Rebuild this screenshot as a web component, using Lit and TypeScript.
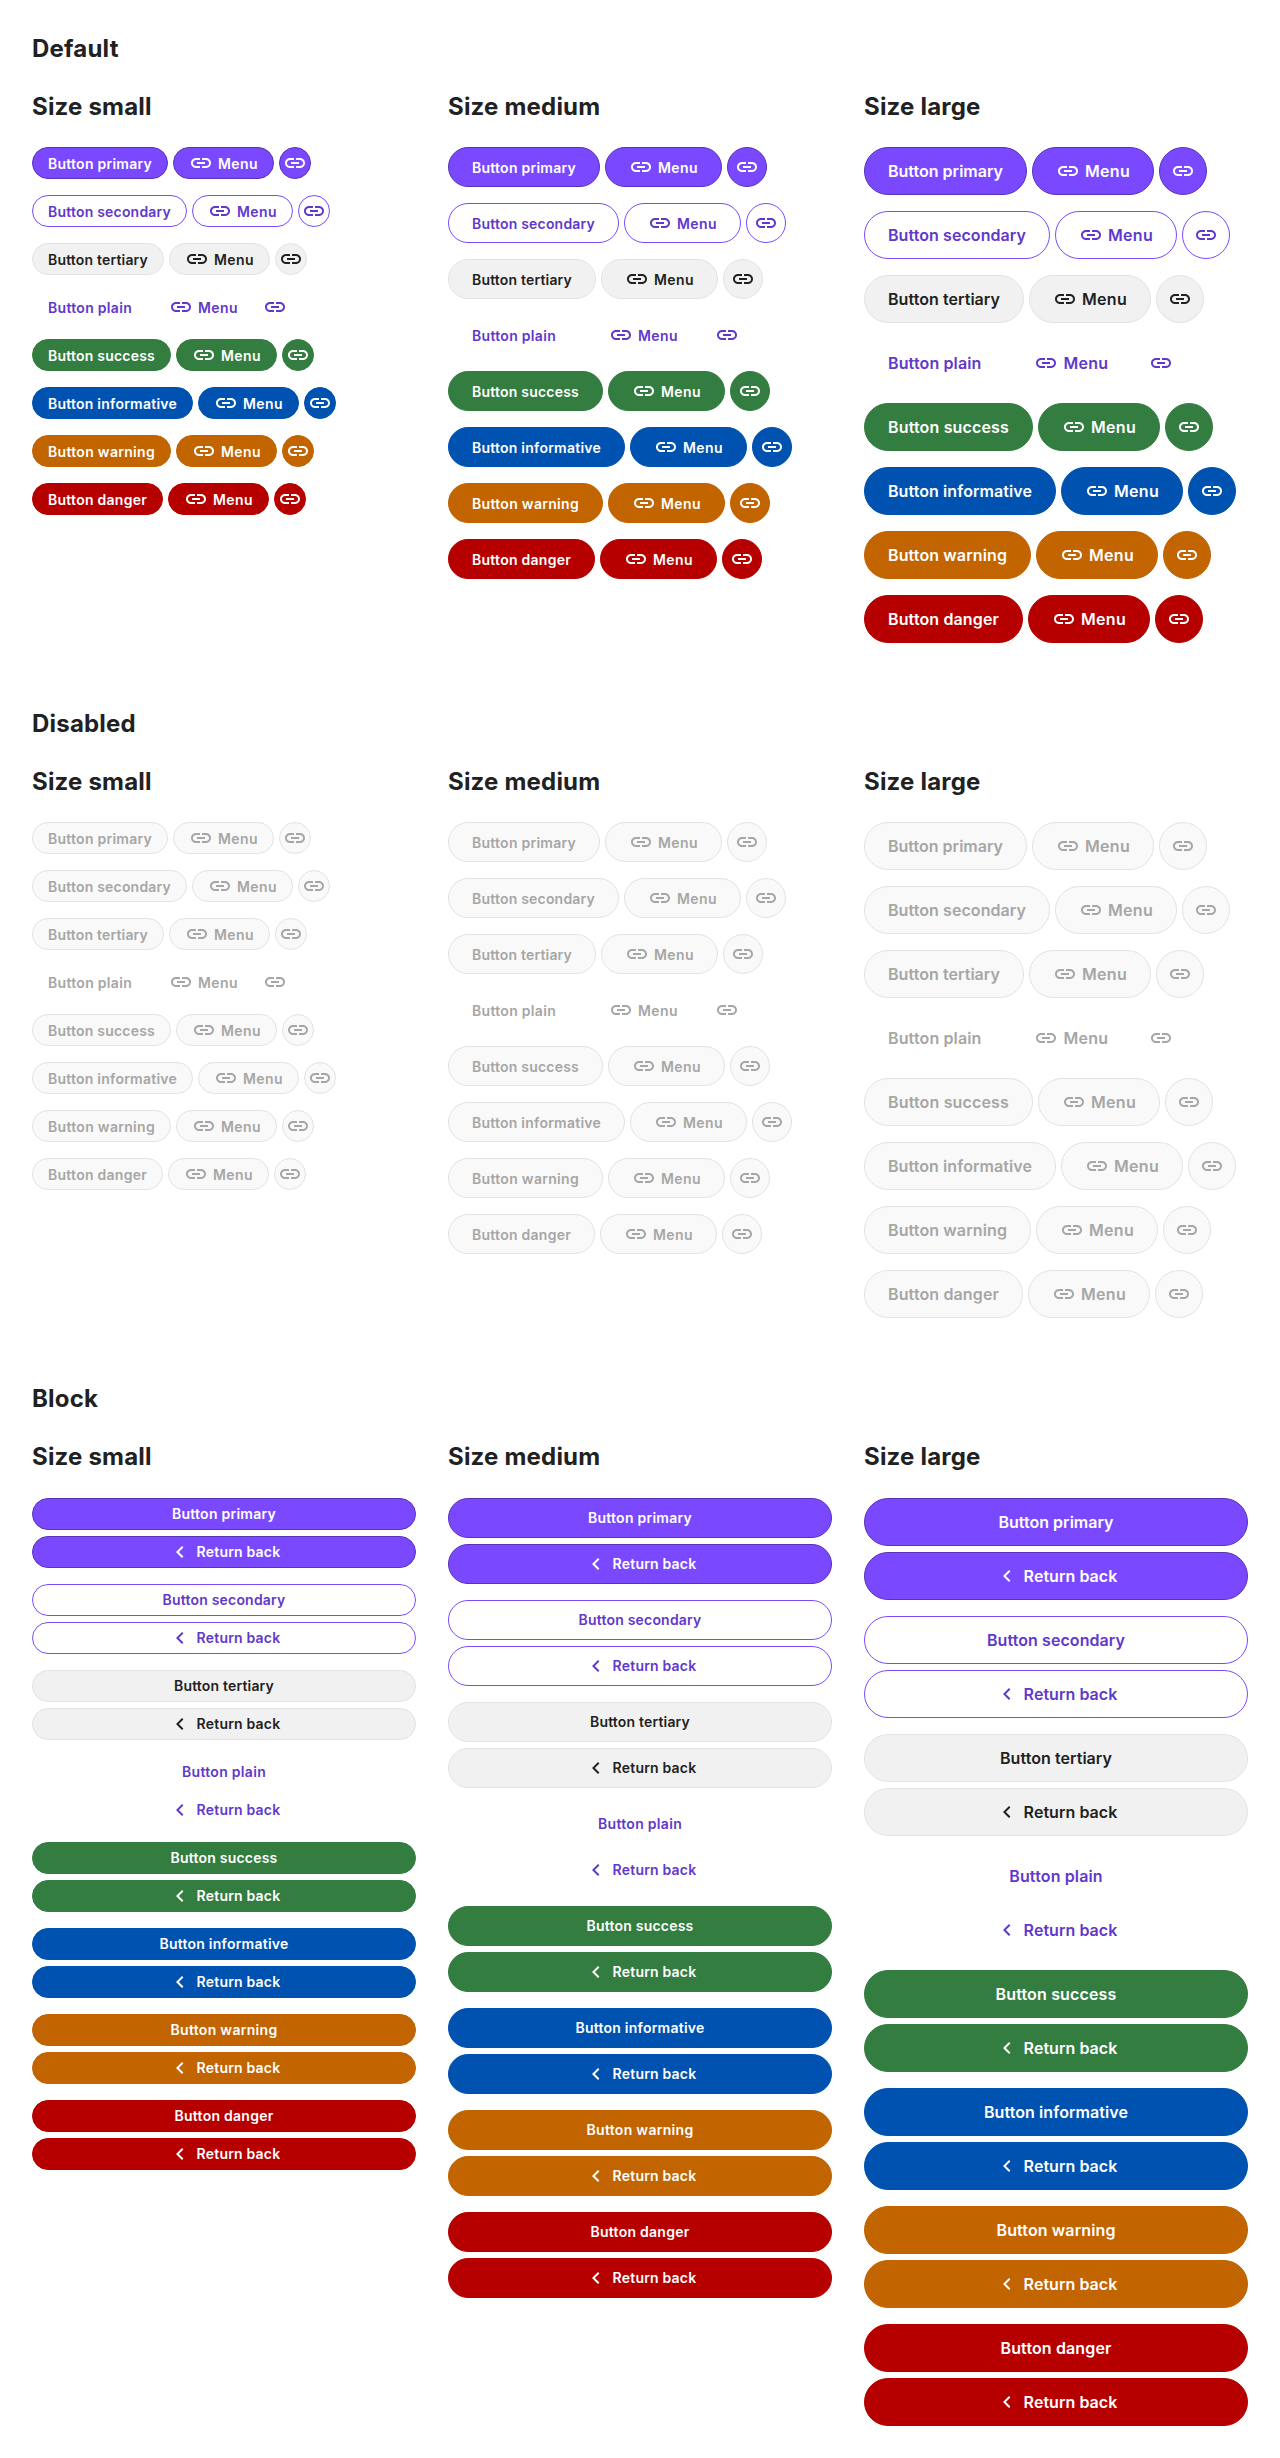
import { LitElement, html, css, svg, nothing } from "lit";
import { customElement, property } from "lit/decorators.js";
import { styleMap } from "lit/directives/style-map.js";

type Size = "small" | "medium" | "large";
type IconName = "link" | "chevron-left";

const VARIANTS = ["primary", "secondary", "tertiary", "plain", "success", "informative", "warning", "danger"];
const SIZES: Size[] = ["small", "medium", "large"];

// Letter spacing in pixels for each label: [small and medium, large].
const TRACKING: Record<string, [number, number]> = {
  "Button primary": [0.251, 0.011],
  "Button secondary": [0.204, 0.0725],
  "Button tertiary": [0.18, 0.054],
  "Button plain": [0.3, 0.13],
  "Button success": [0.216, 0.156],
  "Button informative": [0.234, 0.078],
  "Button warning": [0.304, 0.113],
  "Button danger": [0.256, 0.128],
  "Menu": [0.415, 0.298],
  "Return back": [0.2, 0.05],
};

const ICONS = {
  link: svg`<path d="M3.9 12c0-1.71 1.39-3.1 3.1-3.1h4V7H7c-2.76 0-5 2.24-5 5s2.24 5 5 5h4v-1.9H7c-1.71 0-3.1-1.39-3.1-3.1zM8 13h8v-2H8v2zm9-6h-4v1.9h4c1.71 0 3.1 1.39 3.1 3.1s-1.39 3.1-3.1 3.1h-4V17h4c2.76 0 5-2.24 5-5s-2.24-5-5-5z"/>`,
  "chevron-left": svg`<path d="M15.41 7.41 14 6l-6 6 6 6 1.41-1.41L10.83 12z"/>`,
};

@customElement("ui-button")
export class UiButton extends LitElement {
  @property() variant = "primary";
  @property() size: Size = "small";
  @property() icon?: IconName;
  @property() label = "";
  @property({ type: Boolean }) disabled = false;

  static styles = css`
    :host { display: flex; min-width: 0; }
    .button {
      box-sizing: border-box;
      display: flex;
      flex: 1;
      align-items: center;
      justify-content: center;
      gap: 5px;
      margin: 0;
      border: 1px solid transparent;
      border-radius: 24px;
      background: transparent;
      font-family: Inter, "Liberation Sans", sans-serif;
      font-weight: 600;
      white-space: nowrap;
    }
    .small { height: 32px; padding: 0 15px; font-size: 14px; line-height: 20px; }
    .medium { height: 40px; padding: 0 23px; font-size: 14px; line-height: 20px; }
    .large { height: 48px; padding: 0 23px; font-size: 16px; line-height: 24px; }
    .label { padding-top: 1px; }
    .large .label { padding-top: 0; }
    .round { padding: 0; }
    .round.small { width: 32px; }
    .round.medium { width: 40px; }
    .round.large { width: 48px; }
    .primary { color: #fff; background: #7a49ff; border-color: #5733b8; }
    .secondary { color: #6138cc; background: #fff; border-color: #7a49ff; }
    .tertiary { color: #212121; background: #f1f1f1; border-color: #e3e3e3; }
    .plain { color: #6138cc; }
    .success { color: #fff; background: #347d41; border-color: #347d41; }
    .informative { color: #fff; background: #0052b0; border-color: #0052b0; }
    .warning { color: #fff; background: #c26400; border-color: #c26400; }
    .danger { color: #fff; background: #b60000; border-color: #b60000; }
    .button:disabled { color: #a6a6a6; background: #f9f9f9; border-color: #e3e3e3; }
    .plain:disabled { background: transparent; border-color: transparent; }
    .icon { display: block; flex: none; width: 24px; height: 24px; fill: currentColor; }
  `;

  render() {
    const tracking = TRACKING[this.label]?.[this.size === "large" ? 1 : 0] ?? 0;
    return html`<button
      class="button ${this.variant} ${this.size} ${this.label ? "" : "round"}"
      ?disabled=${this.disabled}
    >${this.icon ? html`<svg class="icon" viewBox="0 0 24 24">${ICONS[this.icon]}</svg>` : nothing}${this.label
      ? html`<span class="label" style=${styleMap({ letterSpacing: `${tracking}px` })}>${this.label}</span>`
      : nothing}</button>`;
  }
}

@customElement("app-root")
export class AppRoot extends LitElement {
  static styles = css`
    :host {
      display: block;
      background: #fff;
      color: #212121;
      font-family: Inter, "Liberation Sans", sans-serif;
    }
    .section { padding: 34.75px 32px 32px; }
    .title { margin: 0; font-size: 24px; line-height: 28.75px; font-weight: 700; letter-spacing: 0.2px; }
    .columns { display: grid; grid-template-columns: repeat(3, 384px); gap: 32px; margin-top: 29.25px; }
    .subtitle { margin: 0 0 25.75px; }
    .rows { display: flex; flex-direction: column; gap: 16px; }
    .row { display: flex; gap: 5px; }
    .stack { display: flex; flex-direction: column; gap: 6px; }
    .section:first-of-type { padding-bottom: 31.875px; }
  `;

  private inlineRow(variant: string, size: Size, disabled: boolean) {
    return html`<div class="row">
      <ui-button .variant=${variant} .size=${size} .label=${"Button " + variant} ?disabled=${disabled}></ui-button>
      <ui-button .variant=${variant} .size=${size} .icon=${"link"} .label=${"Menu"} ?disabled=${disabled}></ui-button>
      <ui-button .variant=${variant} .size=${size} .icon=${"link"} ?disabled=${disabled}></ui-button>
    </div>`;
  }

  private blockRow(variant: string, size: Size) {
    return html`<div class="stack">
      <ui-button .variant=${variant} .size=${size} .label=${"Button " + variant}></ui-button>
      <ui-button .variant=${variant} .size=${size} .icon=${"chevron-left"} .label=${"Return back"}></ui-button>
    </div>`;
  }

  private section(title: string, row: (variant: string, size: Size) => unknown) {
    return html`<section class="section">
      <h2 class="title">${title}</h2>
      <div class="columns">
        ${SIZES.map((size) => html`<div>
          <h2 class="title subtitle">Size ${size}</h2>
          <div class="rows">${VARIANTS.map((variant) => row(variant, size))}</div>
        </div>`)}
      </div>
    </section>`;
  }

  render() {
    return html`
      ${this.section("Default", (v, s) => this.inlineRow(v, s, false))}
      ${this.section("Disabled", (v, s) => this.inlineRow(v, s, true))}
      ${this.section("Block", (v, s) => this.blockRow(v, s))}
    `;
  }
}
